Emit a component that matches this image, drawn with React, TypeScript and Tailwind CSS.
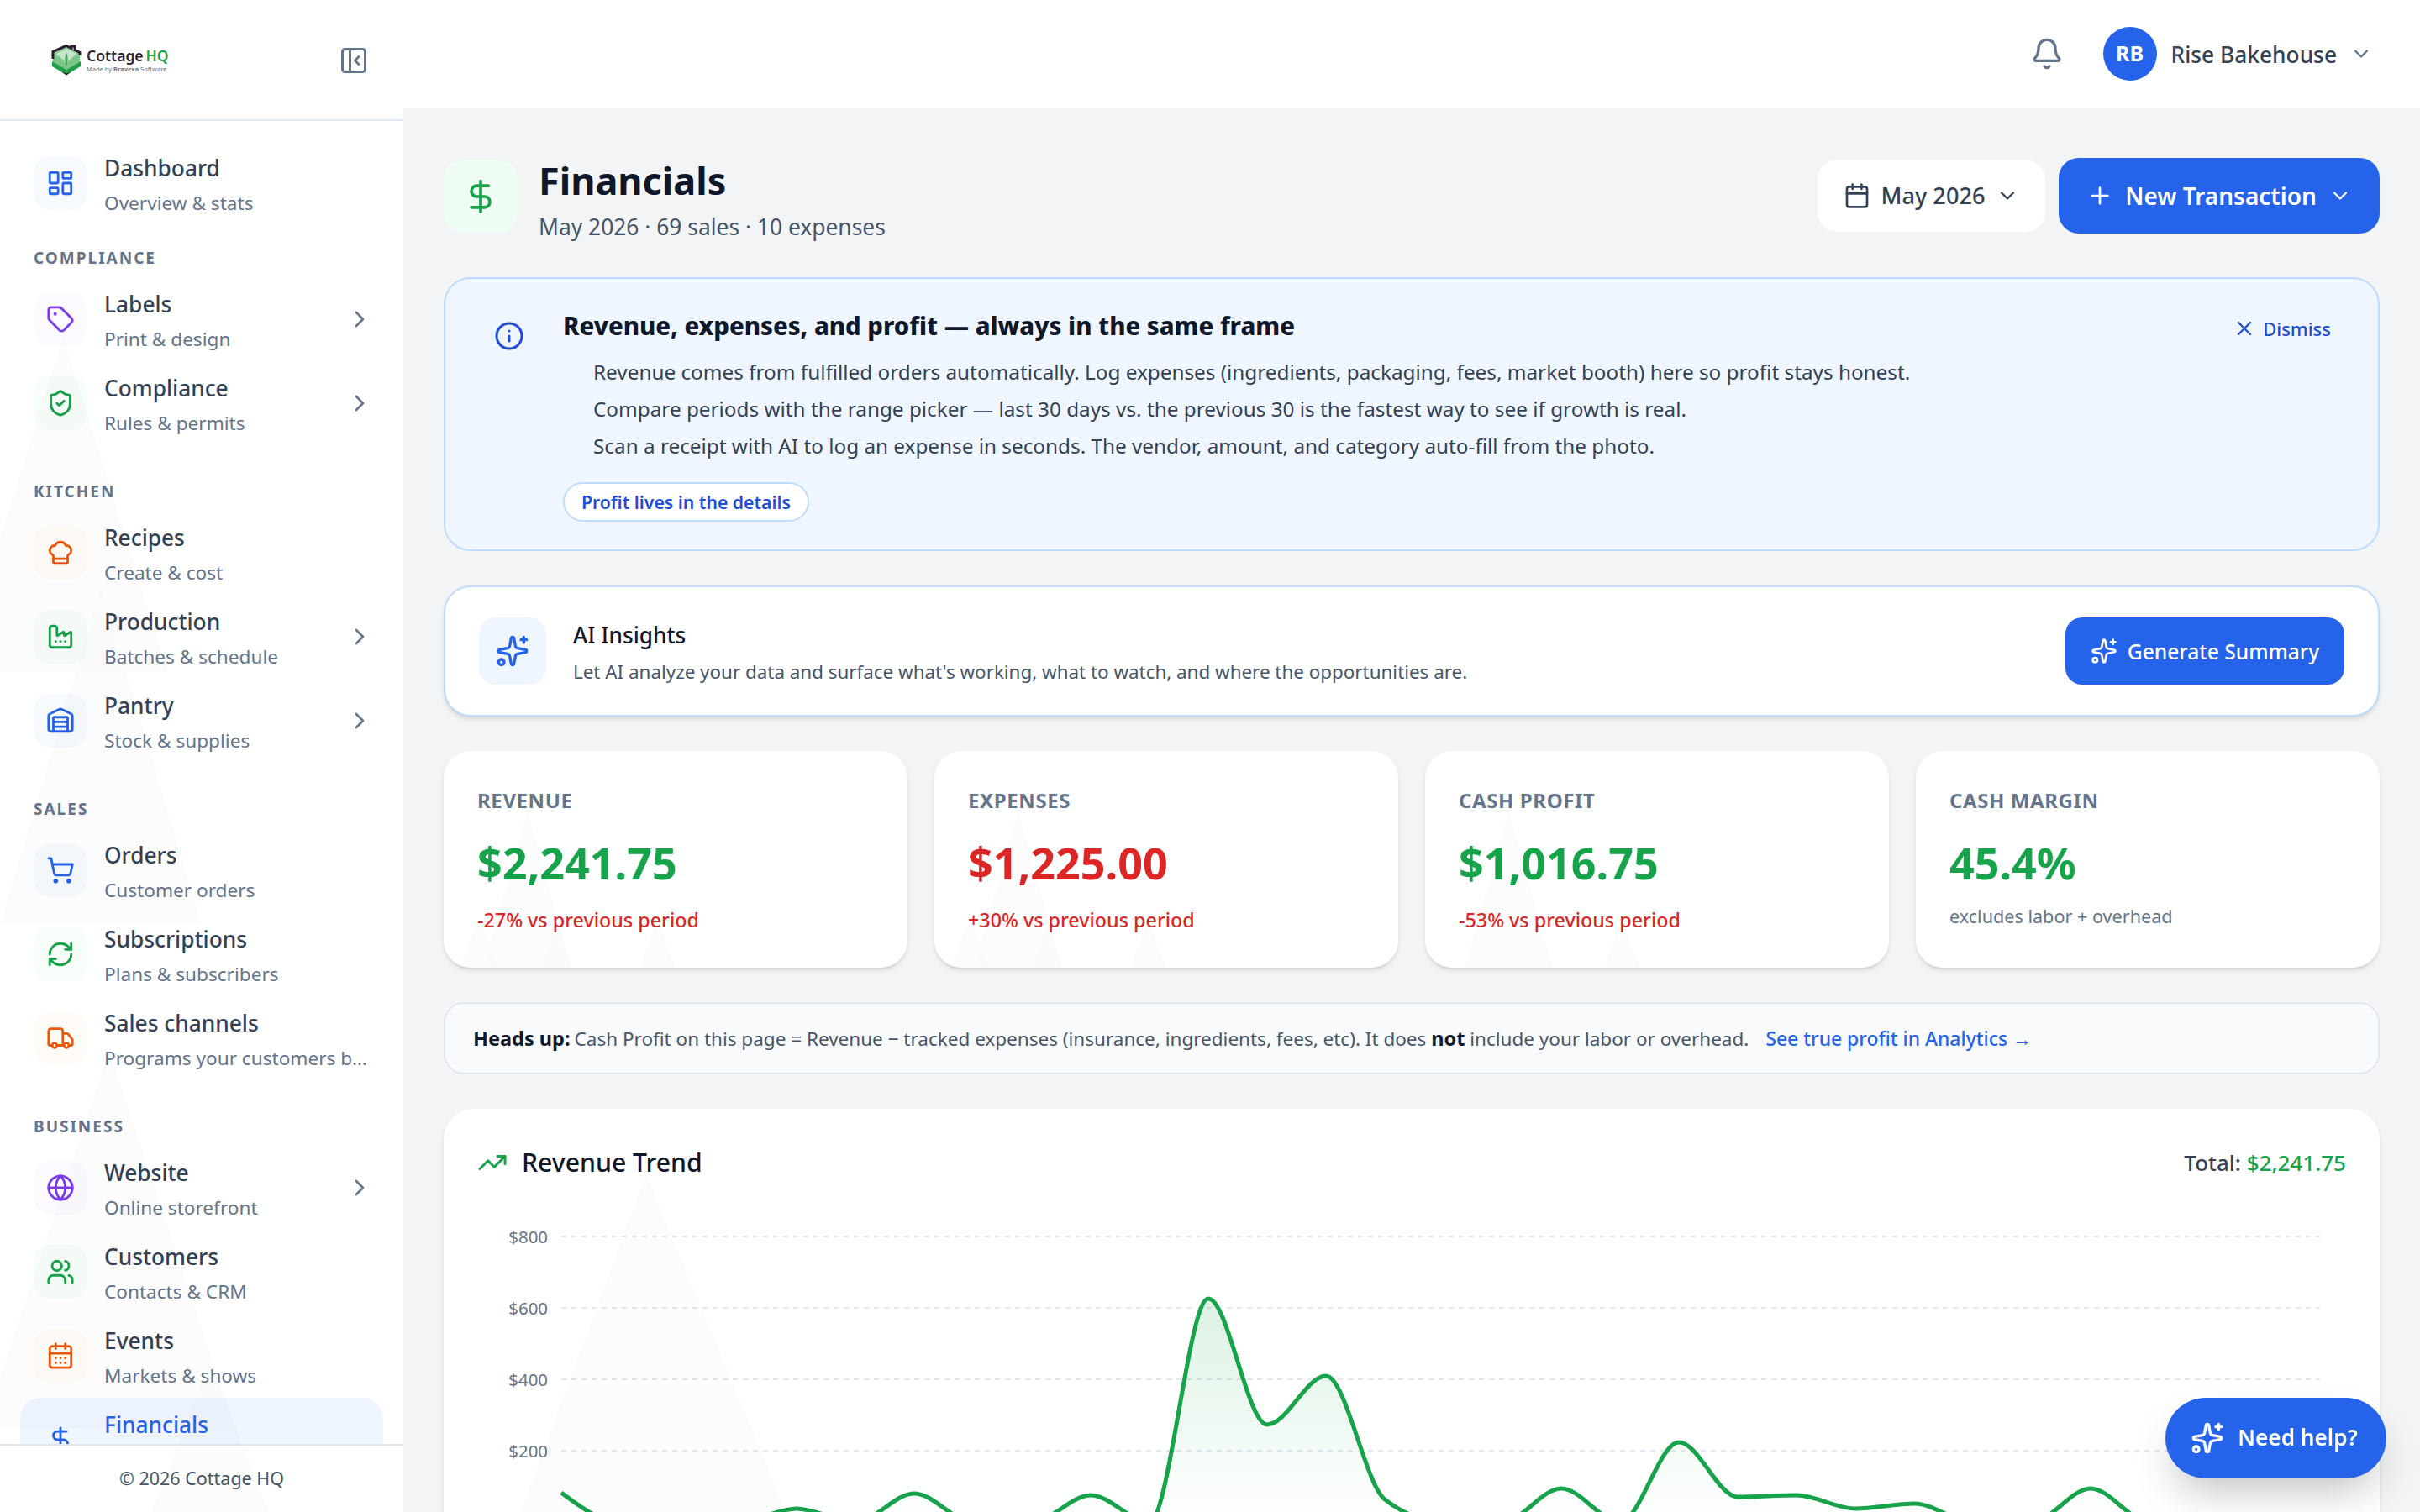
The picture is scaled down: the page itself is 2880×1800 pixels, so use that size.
import {
  Bell,
  Calendar,
  CalendarDays,
  ChefHat,
  ChevronDown,
  ChevronRight,
  DollarSign,
  Factory,
  Globe,
  Info,
  LayoutDashboard,
  PanelLeftClose,
  Plus,
  RefreshCw,
  ShieldCheck,
  ShoppingCart,
  Sparkles,
  Tag,
  TrendingUp,
  Truck,
  Users,
  Warehouse,
  X,
} from "lucide-react";

const Logo = () => (
  <div className="flex items-center gap-[6px]">
    <svg width="36" height="38" viewBox="0 0 36 38">
      <path d="M2 8.5V25L18 36L34 25V11L18 4Z" fill="#7cc68a" />
      <path d="M2 18V9.5L18 2.5L24 5.5V3H28V7.5L34 10.5V14" fill="none" stroke="#2e1a2e" strokeWidth="3" />
      <path d="M18 25C15 19 10 15 6 13.5V11.5L18 6L30 11.5V13.5C26 15 21 19 18 25Z" fill="#fff" fillOpacity="0.55" />
      <path d="M18 27C15.5 21 16 15 18 11C20 15 20.5 21 18 27Z" fill="#3fa95a" />
      <path d="M1 21L18 31L35 21V27L18 37L1 27Z" fill="#22a04a" />
      <path d="M12 33.5L18 37.5L24 33.5L18 35.5Z" fill="#2e1a2e" />
    </svg>
    <div className="flex flex-col">
      <div className="text-[17.5px] leading-[22px] font-semibold text-[#2e1f33] whitespace-nowrap">
        Cottage<span className="ml-[3px] text-[#22a04a]">HQ</span>
      </div>
      <div className="text-[7.5px] leading-[10px] text-[#6b7280] whitespace-nowrap">
        Made by <span className="font-bold">Bravexa</span> Software
      </div>
    </div>
  </div>
);

type NavProps = {
  icon: React.ReactNode;
  box: string;
  title: string;
  sub?: string;
  arrow?: boolean;
  active?: boolean;
};

const NavItem = ({ icon, box, title, sub, arrow, active }: NavProps) => (
  <div className={`flex items-center h-[100px] shrink-0 pl-[16px] pr-[12px] gap-[20px] rounded-[24px] ${active ? "bg-[#eff6ff]" : ""}`}>
    <div className={`w-[64px] h-[64px] rounded-[20px] flex items-center justify-center shrink-0 ${box}`}>{icon}</div>
    <div className="flex-1 min-w-0 pt-[2px]">
      <div className={`text-[26.3px] leading-[40px] font-medium ${active ? "text-[#2563eb]" : "text-[#334155]"}`}>{title}</div>
      <div className="text-[22.6px] leading-[32px] h-[32px] mt-[6px] max-w-[313px] text-[#64748b] truncate">{sub}</div>
    </div>
    {arrow && <ChevronRight size={32} className="text-[#64748b] shrink-0" />}
  </div>
);

const Section = ({ label, first }: { label: string; first?: boolean }) => (
  <div className={`pt-[24px] pb-[8px] pl-[16px] text-[19px] leading-[30px] font-bold tracking-[2px] text-[#64748b] shrink-0 ${first ? "" : "mt-[16px]"}`}>
    {label}
  </div>
);

const Sidebar = () => (
  <aside className="w-[480px] h-screen shrink-0 bg-white flex flex-col">
    <div className="h-[144px] shrink-0 flex items-center justify-between pl-[61px] pr-[41px] border-b-2 border-[#e2e8f0]">
      <Logo />
      <PanelLeftClose size={36} className="text-[#64748b] mt-[2px]" />
    </div>
    <nav className="flex-1 min-h-0 overflow-hidden flex flex-col px-[24px] pt-[24px]">
      <NavItem icon={<LayoutDashboard size={34} className="text-[#2563eb]" />} box="bg-[#f6faff]" title="Dashboard" sub="Overview & stats" />
      <Section label="COMPLIANCE" first />
      <NavItem icon={<Tag size={34} className="text-[#7c3aed]" />} box="bg-[#fbfaff]" title="Labels" sub="Print & design" arrow />
      <NavItem icon={<ShieldCheck size={34} className="text-[#16a34a]" />} box="bg-[#f7fdf9]" title="Compliance" sub="Rules & permits" arrow />
      <Section label="KITCHEN" />
      <NavItem icon={<ChefHat size={34} className="text-[#ea580c]" />} box="bg-[#fffcf7]" title="Recipes" sub="Create & cost" />
      <NavItem icon={<Factory size={34} className="text-[#16a34a]" />} box="bg-[#f7fdf9]" title="Production" sub="Batches & schedule" arrow />
      <NavItem icon={<Warehouse size={34} className="text-[#2563eb]" />} box="bg-[#f6faff]" title="Pantry" sub="Stock & supplies" arrow />
      <Section label="SALES" />
      <NavItem icon={<ShoppingCart size={34} className="text-[#2563eb]" />} box="bg-[#f6faff]" title="Orders" sub="Customer orders" />
      <NavItem icon={<RefreshCw size={34} className="text-[#16a34a]" />} box="bg-[#f7fdf9]" title="Subscriptions" sub="Plans & subscribers" />
      <NavItem icon={<Truck size={34} className="text-[#ea580c]" />} box="bg-[#fffcf7]" title="Sales channels" sub="Programs your customers buy through" />
      <Section label="BUSINESS" />
      <NavItem icon={<Globe size={34} className="text-[#7c3aed]" />} box="bg-[#fbfaff]" title="Website" sub="Online storefront" arrow />
      <NavItem icon={<Users size={34} className="text-[#16a34a]" />} box="bg-[#f7fdf9]" title="Customers" sub="Contacts & CRM" />
      <NavItem icon={<CalendarDays size={34} className="text-[#ea580c]" />} box="bg-[#fffcf7]" title="Events" sub="Markets & shows" />
      <NavItem icon={<DollarSign size={34} className="text-[#2563eb]" />} box="bg-[#eff6ff]" title="Financials" active />
    </nav>
    <div className="h-[81px] shrink-0 border-t-2 border-[#e2e8f0] flex items-center justify-center text-[21.5px] text-[#475569] bg-white">
      © 2026 Cottage HQ
    </div>
  </aside>
);

const TopBar = () => (
  <header className="h-[128px] shrink-0 bg-white flex items-center justify-end pr-[56px]">
    <Bell size={40} className="text-[#64748b] mr-[47px]" />
    <div className="w-[64px] h-[64px] rounded-full bg-[#2563eb] text-white flex items-center justify-center text-[25px] font-bold">RB</div>
    <div className="ml-[17px] mt-[3px] text-[26.3px] font-medium text-[#334155]">Rise Bakehouse</div>
    <ChevronDown size={28} className="ml-[15px] text-[#64748b]" />
  </header>
);

const TitleRow = () => (
  <div className="flex items-start justify-between h-[90px] shrink-0">
    <div className="flex items-start gap-[25px]">
      <div className="w-[88px] h-[88px] mt-[2px] rounded-[24px] bg-[#f0fdf4] flex items-center justify-center">
        <DollarSign size={44} className="text-[#16a34a]" />
      </div>
      <div className="mt-[2px]">
        <div className="text-[45px] leading-[50px] font-bold text-[#0f172a]">Financials</div>
        <div className="text-[26.4px] leading-[40px] mt-[10px] text-[#475569]">May 2026 · 69 sales · 10 expenses</div>
      </div>
    </div>
    <div className="flex items-center gap-[16px] h-[90px]">
      <div className="h-[86px] w-[271px] rounded-[24px] bg-white flex items-center justify-center gap-[12px] text-[#334155]">
        <Calendar size={32} />
        <span className="text-[27.2px] font-medium">May 2026</span>
        <ChevronDown size={28} className="text-[#334155]" />
      </div>
      <div className="h-[90px] w-[382px] rounded-[24px] bg-[#2563eb] flex items-center justify-center gap-[14px] text-white">
        <Plus size={32} />
        <span className="text-[28px] font-semibold">New Transaction</span>
        <ChevronDown size={28} />
      </div>
    </div>
  </div>
);

const InfoBanner = () => (
  <div className="h-[326px] shrink-0 mt-[52px] rounded-[32px] border-2 border-[#bfdbfe] bg-[#eff6ff] pl-[58px] pr-[56px] flex">
    <Info size={36} className="text-[#1d4ed8] mt-[50px] shrink-0" />
    <div className="ml-[46px] flex-1">
      <div className="flex items-center justify-between mt-[36px]">
        <div className="text-[29.3px] leading-[40px] font-extrabold text-[#0f172a]">Revenue, expenses, and profit — always in the same frame</div>
        <div className="flex items-center gap-[8px] text-[22px] font-medium text-[#1d4ed8] mt-[6px]">
          <X size={28} />
          Dismiss
        </div>
      </div>
      <div className="pl-[36px] mt-[13px] text-[24.3px] leading-[44px] text-[#334155]">
        <div>Revenue comes from fulfilled orders automatically. Log expenses (ingredients, packaging, fees, market booth) here so profit stays honest.</div>
        <div>Compare periods with the range picker — last 30 days vs. the previous 30 is the fastest way to see if growth is real.</div>
        <div>Scan a receipt with AI to log an expense in seconds. The vendor, amount, and category auto-fill from the photo.</div>
      </div>
      <div className="mt-[21px] w-fit h-[47px] px-[20px] rounded-full border-2 border-[#bfdbfe] bg-white flex items-center text-[21.2px] font-semibold text-[#1d4ed8]">
        Profit lives in the details
      </div>
    </div>
  </div>
);

const AiCard = () => (
  <div className="h-[156px] shrink-0 mt-[41px] rounded-[32px] border-2 border-[#bfdbfe] bg-white shadow-md flex items-center pl-[40px] pr-[40px]">
    <div className="w-[80px] h-[80px] rounded-[20px] bg-[#eff6ff] flex items-center justify-center">
      <Sparkles size={40} className="text-[#2563eb]" />
    </div>
    <div className="ml-[32px] flex-1 pt-[4px]">
      <div className="text-[26.2px] leading-[40px] font-medium text-[#0f172a]">AI Insights</div>
      <div className="text-[22.4px] leading-[36px] mt-[6px] text-[#475569]">Let AI analyze your data and surface what's working, what to watch, and where the opportunities are.</div>
    </div>
    <div className="w-[332px] h-[80px] rounded-[20px] bg-[#2563eb] text-white flex items-center justify-center gap-[12px]">
      <Sparkles size={32} />
      <span className="text-[24.6px] font-medium mt-[2px]">Generate Summary</span>
    </div>
  </div>
);

type MetricProps = { label: string; value: string; valueColor: string; sub: string; subClass: string };

const Metric = ({ label, value, valueColor, sub, subClass }: MetricProps) => (
  <div className="h-[258px] rounded-[32px] bg-white shadow-md pl-[40px] pt-[42px]">
    <div className="text-[24px] leading-[34px] font-bold tracking-[0.6px] text-[#64748b]">{label}</div>
    <div className={`text-[52px] leading-[64px] mt-[25px] font-bold ${valueColor}`}>{value}</div>
    <div className={`leading-[36px] ${subClass}`}>{sub}</div>
  </div>
);

const HeadsUp = () => (
  <div className="h-[86px] shrink-0 mt-[41px] rounded-[24px] border-2 border-[#e2e8f0] bg-[#f8fafc] pl-[33px] pt-[2px] flex items-center text-[22.5px] text-[#475569] whitespace-nowrap">
    <span className="text-[23.5px] font-bold text-[#0f172a]">Heads up:</span>
    <span className="ml-[5px]">Cash Profit on this page = Revenue − tracked expenses (insurance, ingredients, fees, etc). It does <b className="text-[23.5px] font-bold text-[#0f172a]">not</b> include your labor or overhead.</span>
    <span className="ml-[20px] text-[22.9px] font-medium text-[#2563eb]">See true profit in Analytics →</span>
  </div>
);

// y pixels per day, 31 days across the plot
const chartY = [1777, 1812, 1812, 1812, 1796, 1812, 1778, 1812, 1812, 1780, 1812, 1546, 1696, 1638, 1785, 1812, 1812, 1772, 1812, 1717, 1782, 1780, 1796, 1790, 1812, 1812, 1772, 1812, 1812, 1812, 1812];

const monotonePath = (ys: number[], x0: number, step: number) => {
  const n = ys.length;
  const slopes = ys.map((y, i) => {
    if (i === 0 || i === n - 1) return 0;
    const s0 = (y - ys[i - 1]) / step;
    const s1 = (ys[i + 1] - y) / step;
    const p = (s0 + s1) / 2;
    return (Math.sign(s0) + Math.sign(s1)) * Math.min(Math.abs(s0), Math.abs(s1), 0.5 * Math.abs(p));
  });
  slopes[0] = (3 * (ys[1] - ys[0]) / step - slopes[1]) / 2;
  slopes[n - 1] = (3 * (ys[n - 1] - ys[n - 2]) / step - slopes[n - 2]) / 2;
  let d = `M${x0},${ys[0]}`;
  for (let i = 0; i < n - 1; i++) {
    const a = x0 + i * step;
    const b = a + step;
    const dx = step / 3;
    d += `C${a + dx},${ys[i] + dx * slopes[i]} ${b - dx},${ys[i + 1] - dx * slopes[i + 1]} ${b},${ys[i + 1]}`;
  }
  return d;
};

const ChartCard = () => {
  const x0 = 668;
  const step = 70;
  const line = monotonePath(chartY, x0, step);
  const end = x0 + step * 30;
  return (
    <div className="h-[560px] shrink-0 mt-[41px] rounded-[36px] bg-white shadow-md px-[40px] pt-[40px]">
      <div className="flex items-center justify-between h-[48px]">
        <div className="flex items-center gap-[17px]">
          <TrendingUp size={36} className="text-[#16a34a]" />
          <span className="text-[30.2px] font-medium text-[#0f172a]">Revenue Trend</span>
        </div>
        <div className="text-[26px] font-medium text-[#374151]">
          Total: <span className="text-[#16a34a]">$2,241.75</span>
        </div>
      </div>
      <svg className="mt-[32px] block" width="2224" height="420" viewBox="568 1440 2224 420">
        <defs>
          <linearGradient id="rev" x1="0" y1="0" x2="0" y2="1">
            <stop offset="0%" stopColor="#16a34a" stopOpacity="0.15" />
            <stop offset="100%" stopColor="#16a34a" stopOpacity="0" />
          </linearGradient>
        </defs>
        {[
          ["$800", 1472],
          ["$600", 1557],
          ["$400", 1642],
          ["$200", 1727],
        ].map(([label, y]) => (
          <g key={label}>
            <line x1="668" x2="2761" y1={y} y2={y} stroke="#e2e8f0" strokeWidth="2" strokeDasharray="6 6" />
            <text x="652" y={Number(y) + 8} textAnchor="end" fontSize="20.4" fill="#64748b">
              {label}
            </text>
          </g>
        ))}
        <path d={`${line}L${end},1812L${x0},1812Z`} fill="url(#rev)" />
        <path d={line} fill="none" stroke="#16a34a" strokeWidth="5" />
      </svg>
    </div>
  );
};

// the page's faint watermark of peaks, it sits over everything
const peaks = [
  "769,1397 936,1800 619,1800",
  "75,400 200,800 -50,800",
  "120,700 240,1100 0,1100",
  "130,1250 280,1700 -20,1700",
  "250,1620 320,1800 180,1800",
  "627,963 680,1152 575,1152",
  "571,1093 595,1152 546,1152",
  "662,1093 681,1152 643,1152",
  "782,1093 804,1152 761,1152",
  "1211,963 1264,1152 1159,1152",
  "1155,1093 1179,1152 1130,1152",
  "1246,1093 1265,1152 1227,1152",
  "1366,1093 1388,1152 1345,1152",
  "1795,963 1848,1152 1743,1152",
  "1930,1093 1952,1152 1909,1152",
];

const Watermark = () => (
  <svg className="fixed inset-0 pointer-events-none" width="2880" height="1800" viewBox="0 0 2880 1800">
    {peaks.map((p) => (
      <polygon key={p} points={p} fill="#000" fillOpacity="0.01" />
    ))}
  </svg>
);

export default function App() {
  return (
    <div className="h-screen w-full overflow-hidden flex bg-[#f3f4f6] font-['Noto_Sans',sans-serif]">
      <Sidebar />
      <div className="flex-1 min-w-0 flex flex-col h-screen overflow-hidden">
        <TopBar />
        <main className="flex-1 min-h-0 overflow-hidden flex flex-col px-[48px] pt-[60px]">
          <TitleRow />
          <InfoBanner />
          <AiCard />
          <div className="grid grid-cols-4 gap-[32px] mt-[41px] shrink-0">
            <Metric label="REVENUE" value="$2,241.75" valueColor="text-[#16a34a]" sub="-27% vs previous period" subClass="mt-[18px] text-[23.3px] font-medium text-[#dc2626]" />
            <Metric label="EXPENSES" value="$1,225.00" valueColor="text-[#dc2626]" sub="+30% vs previous period" subClass="mt-[18px] text-[23.3px] font-medium text-[#dc2626]" />
            <Metric label="CASH PROFIT" value="$1,016.75" valueColor="text-[#16a34a]" sub="-53% vs previous period" subClass="mt-[18px] text-[23.3px] font-medium text-[#dc2626]" />
            <Metric label="CASH MARGIN" value="45.4%" valueColor="text-[#16a34a]" sub="excludes labor + overhead" subClass="mt-[14px] text-[21.6px] text-[#64748b]" />
          </div>
          <HeadsUp />
          <ChartCard />
        </main>
      </div>
      <div className="fixed right-[40px] bottom-[40px] h-[96px] w-[263px] rounded-full bg-[#2563eb] text-white shadow-2xl flex items-center justify-center gap-[16px] pr-[4px]">
        <Sparkles size={40} />
        <span className="text-[26.2px] font-semibold">Need help?</span>
      </div>
      <Watermark />
    </div>
  );
}
